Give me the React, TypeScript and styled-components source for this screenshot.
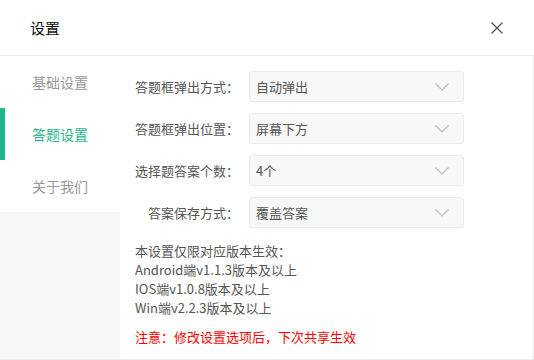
import React from "react";
import styled, { createGlobalStyle } from "styled-components";

const Global = createGlobalStyle`
  html, body { margin: 0; padding: 0; background: #fff; }
  body { font-family: "Microsoft YaHei", "Noto Sans CJK SC", sans-serif; }
  * { box-sizing: border-box; }
`;

const Dialog = styled.div`
  width: 534px;
  height: 360px;
  display: flex;
  flex-direction: column;
  background: #fff;
`;

const Header = styled.div`
  height: 55px;
  display: flex;
  align-items: center;
  justify-content: space-between;
  padding: 0 30px 0 30px;
  flex-shrink: 0;
`;

const Title = styled.div`
  font-size: 15px;
  color: #111;
`;

const Close = styled.button`
  border: none;
  background: none;
  padding: 0;
  width: 14px;
  height: 14px;
  display: flex;
  cursor: pointer;
  margin-right: 0;
`;

const Body = styled.div`
  flex: 1;
  display: flex;
  border-top: 1px solid #ececec;
  border-right: 1px solid #ececec;
  border-bottom: 1px solid #ececec;
  min-height: 0;
`;

const Sidebar = styled.div`
  width: 120px;
  background: #f8f8f8;
  display: flex;
  flex-direction: column;
`;

const NavItem = styled.div<{ $active?: boolean }>`
  height: 52px;
  background: #fff;
  display: flex;
  align-items: center;
  padding-left: 32px;
  font-size: 14px;
  color: ${(p) => (p.$active ? "#1fb78d" : "#999")};
  border-left: 5px solid ${(p) => (p.$active ? "#1fb78d" : "transparent")};
  padding-left: 27px;
`;

const Content = styled.div`
  flex: 1;
  background: #fff;
  padding: 15px 0 0 15px;
  display: flex;
  flex-direction: column;
`;

const Form = styled.div`
  display: flex;
  flex-direction: column;
  gap: 11px;
`;

const Row = styled.div`
  display: flex;
  align-items: center;
  height: 31px;
`;

const Label = styled.div`
  width: 104px;
  text-align: right;
  font-size: 13px;
  color: #555;
  margin-right: 10px;
  white-space: nowrap;
`;

const Select = styled.div`
  width: 215px;
  height: 31px;
  background: #f8f8f8;
  border: 1px solid #ececec;
  border-radius: 3px;
  display: flex;
  align-items: center;
  justify-content: space-between;
  padding: 0 14px 0 6px;
  font-size: 13px;
  color: #555;
`;

const Info = styled.div`
  margin-top: 13px;
  font-size: 13px;
  line-height: 19px;
  color: #555;
`;

const Warn = styled.div`
  margin-top: 10px;
  font-size: 13px;
  line-height: 19px;
  color: #ff0000;
`;

const Chevron = () => (
  <svg width="14" height="8" viewBox="0 0 14 8">
    <path d="M0.5 0.5 L7 7 L13.5 0.5" fill="none" stroke="#bbb" strokeWidth="1.1" />
  </svg>
);

const rows = [
  ["答题框弹出方式：", "自动弹出"],
  ["答题框弹出位置：", "屏幕下方"],
  ["选择题答案个数：", "4个"],
  ["答案保存方式：", "覆盖答案"],
];

export default function App() {
  return (
    <Dialog>
      <Global />
      <Header>
        <Title>设置</Title>
        <Close aria-label="close">
          <svg width="14" height="14" viewBox="0 0 14 14">
            <path d="M1.5 1.5 L12.5 12.5 M12.5 1.5 L1.5 12.5" stroke="#555" strokeWidth="1.3" />
          </svg>
        </Close>
      </Header>
      <Body>
        <Sidebar>
          <NavItem>基础设置</NavItem>
          <NavItem $active>答题设置</NavItem>
          <NavItem>关于我们</NavItem>
        </Sidebar>
        <Content>
          <Form>
            {rows.map(([l, v]) => (
              <Row key={l}>
                <Label>{l}</Label>
                <Select>
                  <span>{v}</span>
                  <Chevron />
                </Select>
              </Row>
            ))}
          </Form>
          <Info>
            本设置仅限对应版本生效：
            <br />
            Android端v1.1.3版本及以上
            <br />
            IOS端v1.0.8版本及以上
            <br />
            Win端v2.2.3版本及以上
          </Info>
          <Warn>注意：修改设置选项后，下次共享生效</Warn>
        </Content>
      </Body>
    </Dialog>
  );
}
